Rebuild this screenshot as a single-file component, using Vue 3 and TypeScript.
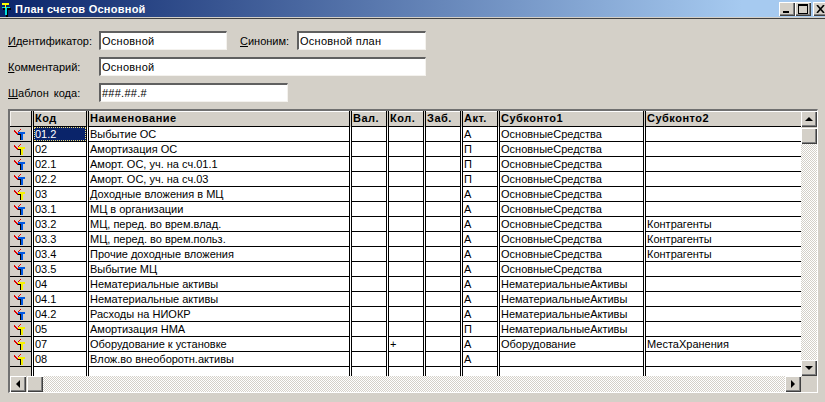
<script setup lang="ts">
interface Row {
  code: string
  name: string
  qty?: string
  act: string
  s1: string
  s2?: string
  parent?: boolean
}
const OS = 'ОсновныеСредства'
const NA = 'НематериальныеАктивы'
const K = 'Контрагенты'
const rows: Row[] = [
  { code: '01.2', name: 'Выбытие ОС', act: 'А', s1: OS },
  { code: '02', name: 'Амортизация ОС', act: 'П', s1: OS, parent: true },
  { code: '02.1', name: 'Аморт. ОС, уч. на сч.01.1', act: 'П', s1: OS },
  { code: '02.2', name: 'Аморт. ОС, уч. на сч.03', act: 'П', s1: OS },
  { code: '03', name: 'Доходные вложения в МЦ', act: 'А', s1: OS, parent: true },
  { code: '03.1', name: 'МЦ в организации', act: 'А', s1: OS },
  { code: '03.2', name: 'МЦ, перед. во врем.влад.', act: 'А', s1: OS, s2: K },
  { code: '03.3', name: 'МЦ, перед. во врем.польз.', act: 'А', s1: OS, s2: K },
  { code: '03.4', name: 'Прочие доходные вложения', act: 'А', s1: OS, s2: K },
  { code: '03.5', name: 'Выбытие МЦ', act: 'А', s1: OS },
  { code: '04', name: 'Нематериальные активы', act: 'А', s1: NA, parent: true },
  { code: '04.1', name: 'Нематериальные активы', act: 'А', s1: NA },
  { code: '04.2', name: 'Расходы на НИОКР', act: 'А', s1: NA },
  { code: '05', name: 'Амортизация НМА', act: 'П', s1: NA, parent: true },
  { code: '07', name: 'Оборудование к установке', qty: '+', act: 'А', s1: 'Оборудование', s2: 'МестаХранения', parent: true },
  { code: '08', name: 'Влож.во внеоборотн.активы', act: 'А', s1: '', parent: true },
]
const headers = ['Код', 'Наименование', 'Вал.', 'Кол.', 'Заб.', 'Акт.', 'Субконто1', 'Субконто2']
</script>

<template>
  <div class="window">
    <header class="titlebar">
      <svg class="title-icon" width="10" height="15" viewBox="0 0 10 15" shape-rendering="crispEdges">
        <path d="M2 6h8v2H7v7H5V8H2z" fill="#000" />
        <path d="M1 5h8v1H6v7H4V6H1z" fill="#00e0e0" />
        <path d="M1 1h7v2H5v3H4V3H1z" fill="#ffff00" />
      </svg>
      <span class="title-text">План счетов Основной</span>
      <div class="win-buttons">
        <button class="win-btn"><svg width="8" height="8" viewBox="0 0 8 8" shape-rendering="crispEdges"><path d="M0 6h6v2H0z" fill="#000" /></svg></button>
        <button class="win-btn"><svg width="10" height="10" viewBox="0 0 10 10" shape-rendering="crispEdges"><path d="M0 0h10v10H0zM1 2v7h8V2z" fill="#000" fill-rule="evenodd" /></svg></button>
        <button class="win-btn close"><svg width="9" height="8" viewBox="0 0 9 8"><path d="M1 0l7 8M8 0L1 8" stroke="#000" stroke-width="1.6" fill="none" /></svg></button>
      </div>
    </header>

    <section class="form">
      <div class="form-row">
        <label class="lbl"><u>И</u>дентификатор:</label>
        <div class="field f-id">Основной</div>
        <label class="lbl syn"><u>С</u>иноним:</label>
        <div class="field f-syn">Основной план</div>
      </div>
      <div class="form-row">
        <label class="lbl"><u>К</u>омментарий:</label>
        <div class="field f-comment">Основной</div>
      </div>
      <div class="form-row">
        <label class="lbl"><u>Ш</u>аблон кода:</label>
        <div class="field f-tpl">###.##.#</div>
      </div>
    </section>

    <section class="frame">
      <div class="frame-top">
        <div class="grid">
          <div class="row head">
            <div class="cell c0"></div>
            <div v-for="(h, i) in headers" :key="h" class="cell" :class="'c' + (i + 1)">{{ h }}</div>
          </div>
          <div v-for="(r, i) in rows" :key="r.code" class="row">
            <div class="cell c0 ico">
              <svg width="11" height="11" viewBox="0 0 11 11" shape-rendering="crispEdges">
                <path d="M0 1h1v1h1v1h1v1h1v2H3V5H2V4H1V3H0z" fill="#e00000" />
                <path d="M6 0h1v1H6v1H5v1H4V2h1V1h1z" fill="#e00000" />
                <path d="M4 3h7v2H9v6H7V5H4z" :fill="r.parent ? '#f4f000' : '#0058e0'" />
                <path d="M4 5h3v1H4zM6 6h1v5H6z" fill="#000" />
              </svg>
            </div>
            <div class="cell c1" :class="{ sel: i === 0 }"><span>{{ r.code }}</span></div>
            <div class="cell c2">{{ r.name }}</div>
            <div class="cell c3"></div>
            <div class="cell c4">{{ r.qty }}</div>
            <div class="cell c5"></div>
            <div class="cell c6">{{ r.act }}</div>
            <div class="cell c7">{{ r.s1 }}</div>
            <div class="cell c8">{{ r.s2 }}</div>
          </div>
          <div class="row">
            <div class="cell c0"></div>
            <div v-for="n in 8" :key="n" class="cell" :class="'c' + n"></div>
          </div>
        </div>
        <div class="vscroll">
          <button class="sb-btn"><i class="arrow up"></i></button>
          <div class="sb-thumb v"></div>
          <div class="track"></div>
          <button class="sb-btn"><i class="arrow down"></i></button>
        </div>
      </div>
      <div class="hscroll">
        <button class="sb-btn"><i class="arrow left"></i></button>
        <div class="sb-thumb h"></div>
        <div class="track"></div>
        <button class="sb-btn"><i class="arrow right"></i></button>
        <div class="corner"></div>
      </div>
    </section>
  </div>
</template>

<style>
html, body { margin: 0; background: #d4d0c8; }
</style>

<style scoped>
.window {
  width: 825px;
  height: 402px;
  overflow: hidden;
  background: #d4d0c8;
  font-family: "Liberation Sans", Arial, sans-serif;
  font-size: 11px;
  color: #000;
  box-sizing: border-box;
}
.titlebar {
  height: 17px;
  display: flex;
  align-items: center;
  background: linear-gradient(90deg, #0a246a 0%, #a6caf0 90%);
  border-bottom: 1px solid #d4d0c8;
  box-shadow: 0 1px 0 #404040;
  padding-left: 1px;
}
.title-icon { flex: none; margin-top: 1px; }
.title-text {
  margin-left: 4px;
  color: #fff;
  font-weight: 700;
  font-size: 11px;
  letter-spacing: 0.25px;
}
.win-buttons {
  margin-left: auto;
  display: flex;
  margin-right: -2px;
}
.win-btn {
  width: 16px;
  height: 14px;
  padding: 0;
  border: none;
  background: #d4d0c8;
  box-shadow: inset 1px 1px 0 #fff, inset -1px -1px 0 #404040, inset -2px -2px 0 #808080;
  display: flex;
  align-items: center;
  justify-content: center;
}
.win-btn.close { margin-left: 2px; width: 14px; }

.form {
  padding: 13px 0 0 8px;
  display: flex;
  flex-direction: column;
  gap: 7px;
}
.form-row {
  display: flex;
  align-items: center;
  height: 19px;
}
.lbl {
  width: 91px;
  flex: none;
  word-spacing: 2px;
}
.lbl.syn { width: 57px; margin-left: 13px; }
.field {
  box-sizing: border-box;
  height: 19px;
  background: #fff;
  padding: 1px 0 0 1px;
  line-height: 15px;
  letter-spacing: 0.25px;
  border-style: solid;
  border-width: 2px 1px 1px 2px;
  border-color: #606060 #f4f2ee #f4f2ee #606060;
  flex: none;
}
.f-id { width: 128px; }
.f-syn { width: 129px; }
.f-comment { width: 327px; }
.f-tpl { width: 189px; }

.frame {
  box-sizing: border-box;
  margin: 7px 0 0 8px;
  width: 810px;
  height: 284px;
  border-style: solid;
  border-width: 2px 1px 1px 2px;
  border-color: #707070 #fff #fff #707070;
  display: flex;
  flex-direction: column;
}
.frame-top { display: flex; height: 265px; }
.grid {
  width: 791px;
  height: 265px;
  overflow: hidden;
  background: #fff;
}
.row {
  display: flex;
  height: 15px;
  gap: 1px;
  background: #fff;
  box-sizing: border-box;
}
.row .cell {
  box-sizing: border-box;
  height: 15px;
  border-bottom: 1px solid #000;
  border-left: 1px solid #000;
  border-right: 1px solid #000;
  padding-left: 1px;
  line-height: 14px;
  white-space: nowrap;
  overflow: hidden;
  flex: none;
}
.row .c0 {
  border-left: none;
  background: #d4d0c8;
  padding: 0;
}
.c0 { width: 22px; }
.c1 { width: 54px; }
.c2 { width: 262px; }
.c3 { width: 36px; }
.c4 { width: 36px; }
.c5 { width: 36px; }
.c6 { width: 36px; }
.c7 { width: 145px; }
.c8 { width: 156px; border-right: none !important; }

.head { height: 16px; background: #d4d0c8; }
.head .cell {
  height: 16px;
  background: #d4d0c8;
  font-weight: 700;
  line-height: 14px;
  padding-left: 1px;
  letter-spacing: 0.5px;
  box-shadow: inset 0 1px 0 #fff;
}
.head .c0 {
  box-shadow: inset 1px 1px 0 #f4f2ee;
}
.ico {
  display: flex;
  align-items: center;
  padding-left: 4px !important;
}
.sel {
  background: #0a246a;
  color: #fff;
  position: relative;
}
.sel::after {
  content: "";
  position: absolute;
  inset: 0;
  border: 1px dotted #f0e080;
}

.vscroll {
  width: 16px;
  height: 265px;
  display: flex;
  flex-direction: column;
}
.hscroll {
  height: 16px;
  display: flex;
}
.sb-btn, .sb-thumb {
  flex: none;
  width: 16px;
  height: 16px;
  padding: 0;
  border: none;
  background: #d4d0c8;
  box-shadow: inset 1px 1px 0 #fff, inset -1px -1px 0 #404040, inset -2px -2px 0 #808080;
  display: flex;
  align-items: center;
  justify-content: center;
}
.sb-thumb.v { margin-top: 1px; }
.sb-thumb.h { margin-left: 1px; }
.track {
  flex: 1;
  background: repeating-conic-gradient(#d4d0c8 0 25%, #fff 0 50%) 0 0 / 2px 2px;
}
.corner { width: 16px; flex: none; background: #d4d0c8; }
.arrow { width: 0; height: 0; border: 4px solid transparent; display: block; }
.arrow.up { border-bottom-color: #000; border-top-width: 0; }
.arrow.down { border-top-color: #000; border-bottom-width: 0; }
.arrow.left { border-right-color: #000; border-left-width: 0; }
.arrow.right { border-left-color: #000; border-right-width: 0; }
</style>
